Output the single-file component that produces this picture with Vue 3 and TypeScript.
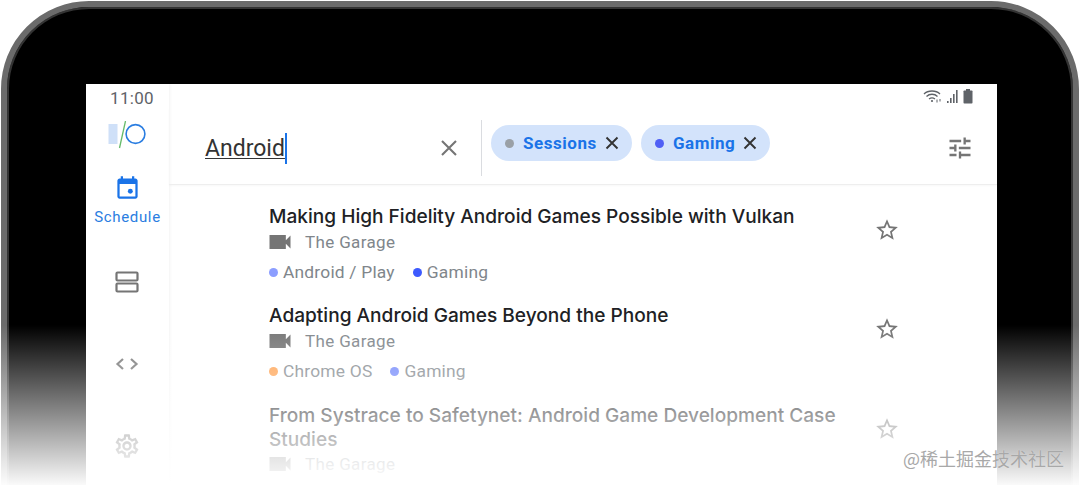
<script setup lang="ts">
const star = "M22 9.24l-7.19-.62L12 2 9.19 8.63 2 9.24l5.46 4.73L5.82 21 12 17.27 18.18 21l-1.63-7.03L22 9.24zM12 15.4l-3.76 2.27 1-4.28-3.32-2.88 4.38-.38L12 6.1l1.71 4.04 4.38.38-3.32 2.88 1 4.28L12 15.4z";
const videocam = "M17 10.5V6H3v12h14v-4.5l4 4v-11l-4 4z";
const gear = "M19.43 12.98c.04-.32.07-.64.07-.98 0-.34-.03-.66-.07-.98l2.11-1.65c.19-.15.24-.42.12-.64l-2-3.46c-.09-.16-.26-.25-.44-.25-.06 0-.12.01-.17.03l-2.49 1c-.52-.4-1.08-.73-1.69-.98l-.38-2.65C14.46 2.18 14.25 2 14 2h-4c-.25 0-.46.18-.49.42l-.38 2.65c-.61.25-1.17.59-1.69.98l-2.49-1c-.06-.02-.12-.03-.18-.03-.17 0-.34.09-.43.25l-2 3.46c-.13.22-.07.49.12.64l2.11 1.65c-.04.32-.07.65-.07.98 0 .33.03.66.07.98l-2.11 1.65c-.19.15-.24.42-.12.64l2 3.46c.09.16.26.25.44.25.06 0 .12-.01.17-.03l2.49-1c.52.4 1.08.73 1.69.98l.38 2.65c.03.24.24.42.49.42h4c.25 0 .46-.18.49-.42l.38-2.65c.61-.25 1.17-.59 1.69-.98l2.49 1c.06.02.12.03.18.03.17 0 .34-.09.43-.25l2-3.46c.12-.22.07-.49-.12-.64l-2.11-1.65zm-1.98-1.71c.04.31.05.52.05.73 0 .21-.02.43-.05.73l-.14 1.13.89.7 1.08.84-.7 1.21-1.27-.51-1.04-.42-.9.68c-.43.32-.84.56-1.25.73l-1.06.43-.16 1.13-.2 1.35h-1.4l-.19-1.35-.16-1.13-1.06-.43c-.43-.18-.83-.41-1.23-.71l-.91-.7-1.06.43-1.27.51-.7-1.21 1.08-.84.89-.7-.14-1.13c-.03-.31-.05-.54-.05-.74s.02-.43.05-.73l.14-1.13-.89-.7-1.08-.84.7-1.21 1.27.51 1.04.42.9-.68c.43-.32.84-.56 1.25-.73l1.06-.43.16-1.13.2-1.35h1.39l.19 1.35.16 1.13 1.06.43c.43.18.83.41 1.23.71l.91.7 1.06-.43 1.27-.51.7 1.21-1.07.85-.89.7.14 1.13zM12 8c-2.21 0-4 1.79-4 4s1.79 4 4 4 4-1.79 4-4-1.79-4-4-4zm0 6c-1.1 0-2-.9-2-2s.9-2 2-2 2 .9 2 2-.9 2-2 2z";

const chips = [
  { label: "Sessions", dot: "#9aa0a6" },
  { label: "Gaming", dot: "#4f5ff5" },
];

const sessions = [
  {
    title: "Making High Fidelity Android Games Possible with Vulkan",
    tags: [
      { label: "Android / Play", dot: "#8c9eff" },
      { label: "Gaming", dot: "#3d5afe" },
    ],
  },
  {
    title: "Adapting Android Games Beyond the Phone",
    tags: [
      { label: "Chrome OS", dot: "#ffa04d" },
      { label: "Gaming", dot: "#6f85fb" },
    ],
  },
  {
    title: "From Systrace to Safetynet: Android Game Development Case Studies",
    tags: [],
  },
];
</script>

<template>
  <div class="page">
    <div class="device">
      <div class="screen">
        <aside class="rail">
          <div class="time">11:00</div>
          <svg class="logo" width="40" height="28" viewBox="0 0 40 28">
            <rect x="0.5" y="3" width="9" height="20" fill="#cfe0f8" />
            <path d="M17.5 0 L11.5 27" stroke="#66bb6a" stroke-width="1.3" fill="none" />
            <circle cx="27.5" cy="13" r="9.4" stroke="#2a7de1" stroke-width="1.6" fill="none" />
          </svg>
          <nav class="nav">
            <div class="nav-item active">
              <svg width="27" height="27" viewBox="0 0 24 24">
                <path fill="#1a73e8" fill-rule="evenodd" d="M6 1h2v2h8V1h2v2h1c1.1 0 2 .9 2 2v14c0 1.1-.9 2-2 2H5c-1.1 0-2-.9-2-2V5c0-1.1.9-2 2-2h1V1zM5 8v11h14V8H5z" />
                <circle cx="14.5" cy="14.5" r="2.2" fill="#1a73e8" />
              </svg>
              <span>Schedule</span>
            </div>
            <div class="nav-item">
              <svg width="28" height="28" viewBox="0 0 28 28" fill="none" stroke="#757575" stroke-width="2.2">
                <rect x="3.5" y="4.5" width="21" height="8" rx="1" />
                <rect x="3.5" y="15.5" width="21" height="8" rx="1" />
              </svg>
            </div>
            <div class="nav-item">
              <svg width="28" height="28" viewBox="0 0 28 28" fill="none" stroke="#757575" stroke-width="2.2">
                <path d="M10 9 L4.5 14 L10 19" />
                <path d="M18 9 L23.5 14 L18 19" />
              </svg>
            </div>
            <div class="nav-item">
              <svg width="28" height="28" viewBox="0 0 24 24"><path :d="gear" fill="#757575" /></svg>
            </div>
          </nav>
        </aside>

        <main class="main">
          <div class="status">
            <svg width="20" height="15" viewBox="0 0 20 15" fill="none" stroke="#5f6368" stroke-width="1.3">
              <path d="M1 5 C5 1 13 1 17 5" />
              <path d="M3.5 7.5 C6.5 4.5 11.5 4.5 14.5 7.5" />
              <path d="M6 10 C8 8.5 10 8.5 12 10" />
              <circle cx="9" cy="12" r="1.1" fill="#5f6368" stroke="none" />
              <path d="M14 10.5 V13.5 M17 12.5 V10" stroke-width="1" />
            </svg>
            <svg class="bars" width="13" height="15" viewBox="0 0 13 15" fill="#5f6368">
              <rect x="1" y="12" width="1.6" height="2" />
              <rect x="4" y="9" width="1.6" height="5" />
              <rect x="7" y="5" width="1.6" height="9" />
              <rect x="10" y="1" width="1.6" height="13" />
            </svg>
            <svg class="battery" width="10" height="15" viewBox="0 0 10 15" fill="#5f6368">
              <rect x="3" y="0" width="4" height="2" />
              <rect x="0.5" y="1.5" width="9" height="13" rx="0.8" />
            </svg>
          </div>

          <header class="search">
            <div class="query">
              <span class="query-text">Android</span><span class="caret"></span>
            </div>
            <svg class="clear" width="24" height="24" viewBox="0 0 24 24" stroke="#757575" stroke-width="2.1" fill="none">
              <path d="M5 5 L19 19 M19 5 L5 19" />
            </svg>
            <div class="chips">
              <div v-for="chip in chips" :key="chip.label" class="chip">
                <i class="chip-dot" :style="{ background: chip.dot }"></i>
                <span>{{ chip.label }}</span>
                <svg width="16" height="16" viewBox="0 0 16 16" stroke="#333" stroke-width="1.9" fill="none">
                  <path d="M2.5 2.5 L13.5 13.5 M13.5 2.5 L2.5 13.5" />
                </svg>
              </div>
            </div>
            <svg class="tune" width="28" height="28" viewBox="0 0 24 24">
              <path fill="#757575" d="M3 17v2h6v-2H3zM3 5v2h10V5H3zm10 16v-2h8v-2h-8v-2h-2v6h2zM7 9v2H3v2h4v2h2V9H7zm14 4v-2H11v2h10zm-6-4h2V7h4V5h-4V3h-2v6z" />
            </svg>
          </header>

          <ul class="list">
            <li v-for="s in sessions" :key="s.title" class="row">
              <div class="body">
                <h3 class="title">{{ s.title }}</h3>
                <div class="place">
                  <svg width="28" height="28" viewBox="0 0 24 24"><path :d="videocam" fill="#757575" /></svg>
                  <span>The Garage</span>
                </div>
                <div v-if="s.tags.length" class="tags">
                  <span v-for="t in s.tags" :key="t.label" class="tag">
                    <i class="tag-dot" :style="{ background: t.dot }"></i>{{ t.label }}
                  </span>
                </div>
              </div>
              <svg class="star" width="26" height="26" viewBox="0 0 24 24"><path :d="star" fill="#757575" /></svg>
            </li>
          </ul>
        </main>
      </div>
    </div>
    <div class="fade"></div>
    <div class="mark">@稀土掘金技术社区</div>
  </div>
</template>

<style>
html,
body {
  margin: 0;
  background: #fff;
}
</style>

<style scoped>
.page {
  position: relative;
  width: 1080px;
  height: 485px;
  overflow: hidden;
  background: #fff;
  padding: 1px 1px 0;
  box-sizing: border-box;
  font-family: Roboto, sans-serif;
}
.device {
  box-sizing: border-box;
  width: 1078px;
  height: 700px;
  background: #000;
  border: 6px solid #6b6b6b;
  border-radius: 88px;
  box-shadow: inset 0 0 0 2px #333;
  padding: 77px 76px 0 79px;
}
.screen {
  display: flex;
  background: #fff;
  height: 500px;
}
.rail {
  width: 83px;
  flex: none;
  display: flex;
  flex-direction: column;
  align-items: center;
  box-shadow: 1px 0 3px rgba(0, 0, 0, 0.05);
}
.time {
  margin-top: 4px;
  padding-left: 9px;
  font-size: 17px;
  line-height: 20px;
  color: #5f6368;
  letter-spacing: 0.3px;
}
.logo {
  margin-top: 13px;
}
.nav {
  display: flex;
  flex-direction: column;
  align-items: center;
  margin-top: 26px;
}
.nav-item {
  display: flex;
  flex-direction: column;
  align-items: center;
  height: 82px;
  padding-top: 10px;
  box-sizing: border-box;
}
.nav-item.active {
  height: 83px;
  padding-top: 0;
  font-size: 15px;
  line-height: 20px;
  letter-spacing: 0.65px;
  color: #2a7de1;
}
.nav-item.active span {
  margin-top: 5px;
}
.main {
  flex: 1;
  min-width: 0;
}
.status {
  height: 24px;
  display: flex;
  justify-content: flex-end;
  align-items: flex-start;
  padding: 5px 24px 0 0;
  box-sizing: border-box;
}
.bars {
  margin: 0 4px 0 3px;
}
.search {
  box-sizing: border-box;
  height: 77px;
  display: flex;
  align-items: center;
  padding: 4px 0 0 36px;
  border-bottom: 1px solid #eeeeee;
  box-shadow: 0 1px 2px rgba(0, 0, 0, 0.03);
}
.query {
  width: 232px;
  display: flex;
  align-items: center;
  font-size: 23px;
  line-height: 31px;
  color: #333;
}
.query-text {
  text-decoration: underline;
  text-underline-offset: 2px;
  text-decoration-thickness: 1px;
}
.caret {
  width: 2px;
  height: 31px;
  background: #1a73e8;
}
.clear {
  flex: none;
}
.chips {
  box-sizing: border-box;
  display: flex;
  gap: 9px;
  align-items: flex-start;
  margin-left: 20px;
  padding: 5px 0 0 9px;
  height: 56px;
  border-left: 1px solid #dadce0;
}
.chip {
  display: flex;
  align-items: center;
  height: 36px;
  padding: 0 12px 0 14px;
  border-radius: 18px;
  background: #d3e3fb;
  color: #1a73e8;
  font-size: 17px;
  font-weight: 700;
  letter-spacing: 0.55px;
}
.chip-dot {
  width: 9px;
  height: 9px;
  border-radius: 50%;
  margin-right: 9px;
}
.chip svg {
  margin-left: 7px;
}
.tune {
  margin-left: auto;
  margin-right: 23px;
}
.list {
  list-style: none;
  margin: 0;
  padding: 19px 0 0 100px;
}
.row {
  display: flex;
  align-items: flex-start;
  width: 628px;
  height: 99.4px;
}
.body {
  width: 570px;
  flex: none;
}
.title {
  margin: 0;
  font-family: Inter, sans-serif;
  font-weight: 500;
  font-size: 19.1px;
  line-height: 24px;
  color: #202124;
}
.place {
  display: flex;
  align-items: center;
  height: 27px;
  margin-left: -3.5px;
  font-size: 17px;
  color: #80868b;
  letter-spacing: 0.35px;
}
.place svg {
  flex: none;
}
.place span {
  margin-left: 11.5px;
}
.tags {
  display: flex;
  gap: 18px;
  margin-top: 4px;
  font-size: 17.4px;
  line-height: 26px;
  color: #80868b;
  letter-spacing: 0.2px;
}
.tag {
  display: flex;
  align-items: center;
}
.tag-dot {
  width: 9px;
  height: 9px;
  border-radius: 50%;
  margin-right: 5px;
}
.star {
  flex: none;
  margin: 13px 0 0 34.5px;
}
.fade {
  position: absolute;
  left: 0;
  right: 0;
  top: 325px;
  bottom: 0;
  background: linear-gradient(to bottom, rgba(255, 255, 255, 0), rgba(255, 255, 255, 0.98));
}
.mark {
  position: absolute;
  right: 16px;
  top: 447px;
  font-family: "Noto Sans CJK SC", sans-serif;
  font-size: 18px;
  line-height: 22px;
  color: #a8a8a8;
  text-shadow: 0 0 1px rgba(255, 255, 255, 0.6);
}
</style>
